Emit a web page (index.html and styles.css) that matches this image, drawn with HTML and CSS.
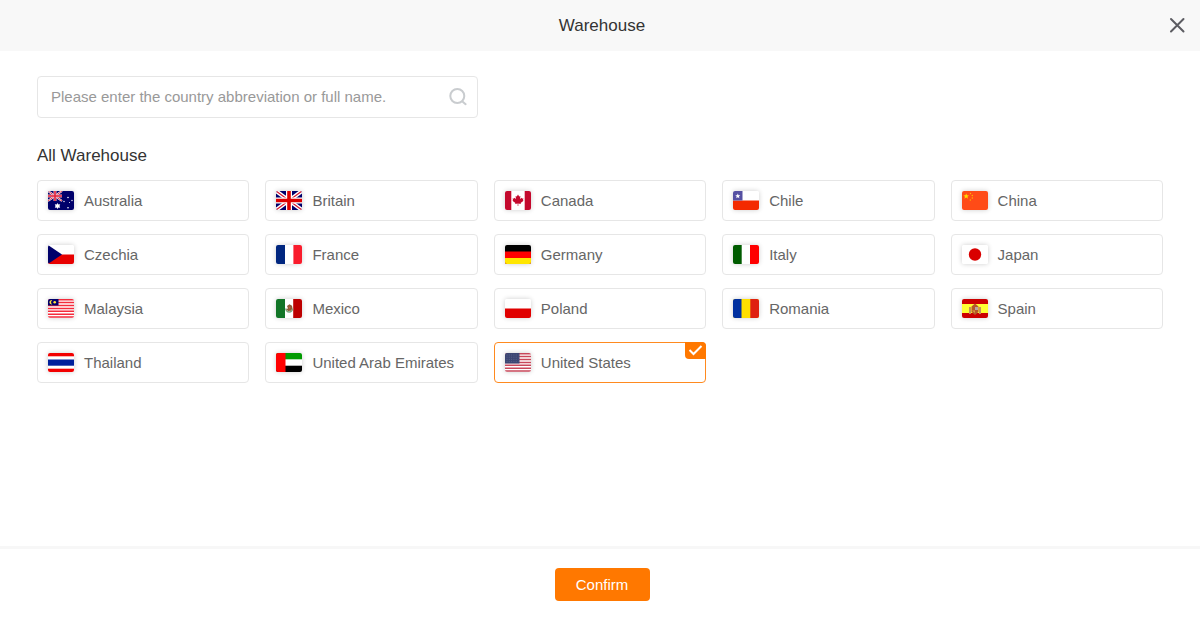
FILE: index.html
```html
<!DOCTYPE html>
<html lang="en">
<head>
    <meta charset="UTF-8">
    <meta name="viewport" content="width=device-width, initial-scale=1.0">
    <title>Warehouse</title>
    <link rel="stylesheet" href="styles.css">
</head>
<body>
    <header class="header">
        <h1 class="title">Warehouse</h1>
        <button class="close-btn" type="button" aria-label="Close">
            <svg width="16" height="16" viewBox="0 0 16 16"><path d="M2 2l12.5 12.5M14.5 2L2 14.5" stroke="#5c5c62" stroke-width="2" stroke-linecap="round"/></svg>
        </button>
    </header>

    <main class="content">
        <div class="search">
            <input class="search-input" type="text" aria-label="Search warehouse" placeholder="Please enter the country abbreviation or full name.">
            <button class="search-btn" type="button" aria-label="Search">
                <svg width="18" height="18" viewBox="0 0 18 18" fill="none" stroke="#c9cccf" stroke-width="2" stroke-linecap="round"><circle cx="8.3" cy="8" r="7"/><path d="M13.4 13.4l3.2 2.8"/></svg>
            </button>
        </div>

        <h2 class="subtitle">All Warehouse</h2>
        <div class="list">
            <label class="item">
                <input type="radio" name="warehouse" value="AU">
                <svg class="flag" viewBox="0 0 26 19">
                    <rect width="26" height="19" fill="#00006b"/>
                    <path d="M0 0l14 10M14 0L0 10" stroke="#fff" stroke-width="2"/>
                    <path d="M0 0l14 10M14 0L0 10" stroke="#e03a50" stroke-width="1"/>
                    <path d="M7 0v10M0 5h14" stroke="#f4b8c4" stroke-width="3"/>
                    <path d="M7 0v10M0 5h14" stroke="#e0243c" stroke-width="1.6"/>
                    <path d="M9.5 12l.9 1.5 1.8-.2-.7 1.7.7 1.7-1.8-.2-.9 1.5-.9-1.5-1.8.2.7-1.700-.7-1.700 1.800.2z" fill="#fff"/>
                    <g fill="#fff"><circle cx="20" cy="6.5" r=".8"/><circle cx="16" cy="10.5" r=".7"/><circle cx="24" cy="9.5" r=".7"/><circle cx="21.5" cy="11.5" r=".5"/><circle cx="20" cy="16.8" r=".8"/></g>
                </svg>
                <span>Australia</span>
            </label>
            <label class="item">
                <input type="radio" name="warehouse" value="GB">
                <svg class="flag" viewBox="0 0 26 19">
                    <rect width="26" height="19" fill="#00006b"/>
                    <path d="M0 0l26 19M26 0L0 19" stroke="#fff" stroke-width="4"/>
                    <path d="M0 0l26 19M26 0L0 19" stroke="#d8152c" stroke-width="1.2"/>
                    <path d="M13 0v19M0 9.5h26" stroke="#fff" stroke-width="6"/>
                    <path d="M13 0v19M0 9.5h26" stroke="#d00" stroke-width="3.6"/>
                </svg>
                <span>Britain</span>
            </label>
            <label class="item">
                <input type="radio" name="warehouse" value="CA">
                <svg class="flag" viewBox="0 0 26 19">
                    <rect width="26" height="19" fill="#fff"/>
                    <path d="M0 0h6.3v19H0zM19.7 0H26v19h-6.3z" fill="#c4092d"/>
                    <path d="M13 3.5l1.2 2.1 1.2-.5-.4 3 1.6-1.4.4.9 1.5-.1-.6 1.7.7.5-3 2.3.3 1-2.6-.4V15h-.6v-2.4l-2.6.4.3-1-3-2.3.7-.5-.6-1.7 1.5.1.4-.9L11 8.1l-.4-3 1.2.5z" fill="#c4092d"/>
                </svg>
                <span>Canada</span>
            </label>
            <label class="item">
                <input type="radio" name="warehouse" value="CL">
                <svg class="flag" viewBox="0 0 26 19">
                    <rect width="26" height="19" fill="#fff"/>
                    <rect y="9.5" width="26" height="9.5" fill="#f32a00"/>
                    <rect width="9.5" height="9.5" fill="#5550a2"/>
                    <path d="M4.8 2.5l.7 1.7 1.8.1-1.4 1.2.5 1.8-1.6-1-1.6 1 .5-1.8-1.4-1.2 1.8-.1z" fill="#fff"/>
                </svg>
                <span>Chile</span>
            </label>
            <label class="item">
                <input type="radio" name="warehouse" value="CN">
                <svg class="flag" viewBox="0 0 26 19">
                    <rect width="26" height="19" fill="#ff4b17"/>
                    <path d="M4.2 2.5l.8 1.8 2 .1-1.6 1.3.6 2-1.8-1.1-1.8 1.1.6-2-1.6-1.3 2-.1z" fill="#ffdc00"/>
                    <g fill="#ffb800"><circle cx="8.5" cy="2.5" r=".7"/><circle cx="10.3" cy="4.5" r=".7"/><circle cx="10.3" cy="7" r=".7"/><circle cx="8.3" cy="9" r=".7"/></g>
                </svg>
                <span>China</span>
            </label>
            <label class="item">
                <input type="radio" name="warehouse" value="CZ">
                <svg class="flag" viewBox="0 0 26 19">
                    <rect width="26" height="19" fill="#fff"/>
                    <rect y="9.5" width="26" height="9.5" fill="#e80000"/>
                    <path d="M0 0l14 9.5L0 19z" fill="#00006b"/>
                </svg>
                <span>Czechia</span>
            </label>
            <label class="item">
                <input type="radio" name="warehouse" value="FR">
                <svg class="flag" viewBox="0 0 26 19">
                    <rect width="26" height="19" fill="#fff"/>
                    <rect width="9" height="19" fill="#00267f"/>
                    <rect x="17.4" width="8.6" height="19" fill="#f91c2c"/>
                </svg>
                <span>France</span>
            </label>
            <label class="item">
                <input type="radio" name="warehouse" value="DE">
                <svg class="flag" viewBox="0 0 26 19">
                    <rect width="26" height="19" fill="#000"/>
                    <rect y="6.5" width="26" height="12.5" fill="#f00"/>
                    <rect y="13" width="26" height="6" fill="#ffe600"/>
                </svg>
                <span>Germany</span>
            </label>
            <label class="item">
                <input type="radio" name="warehouse" value="IT">
                <svg class="flag" viewBox="0 0 26 19">
                    <rect width="26" height="19" fill="#fff"/>
                    <rect width="8.7" height="19" fill="#005c00"/>
                    <rect x="17" width="9" height="19" fill="#f00"/>
                </svg>
                <span>Italy</span>
            </label>
            <label class="item">
                <input type="radio" name="warehouse" value="JP">
                <svg class="flag" viewBox="0 0 26 19">
                    <rect width="26" height="19" fill="#fff"/>
                    <circle cx="13" cy="9.5" r="6.2" fill="#d90000"/>
                </svg>
                <span>Japan</span>
            </label>
            <label class="item">
                <input type="radio" name="warehouse" value="MY">
                <svg class="flag" viewBox="0 0 26 19">
                    <rect width="26" height="19" fill="#fff"/>
                    <path d="M0 .7h26M0 3.6h26M0 6.5h26M0 9.4h26M0 12.3h26M0 15.2h26M0 18.1h26" stroke="#f42b3c" stroke-width="1.5"/>
                    <rect width="10.5" height="6.5" fill="#00006b"/>
                    <path d="M4.3 1.2a2.2 2.2 0 1 0 0 4.2 2.4 2.4 0 0 1 0-4.2z" fill="#ffe23b"/>
                    <circle cx="6.7" cy="3.2" r="1.3" fill="#ffe23b"/>
                </svg>
                <span>Malaysia</span>
            </label>
            <label class="item">
                <input type="radio" name="warehouse" value="MX">
                <svg class="flag" viewBox="0 0 26 19">
                    <rect width="26" height="19" fill="#fff"/>
                    <rect width="9" height="19" fill="#127527"/>
                    <rect x="17.2" width="8.8" height="19" fill="#bd0000"/>
                    <path d="M9.8 9.5a3.4 3.4 0 0 0 6.8 0" stroke="#7ba77f" stroke-width="1.5" fill="none"/>
                    <path d="M11 7l2.5-1.7L16 6.8l.5 2.5-1.5 2.5-3 .3-2-2 2-.6z" fill="#8d5c38"/>
                    <path d="M12.500 7.500l2 .4-.8 2z" fill="#d15c44"/>
                </svg>
                <span>Mexico</span>
            </label>
            <label class="item">
                <input type="radio" name="warehouse" value="PL">
                <svg class="flag" viewBox="0 0 26 19">
                    <rect width="26" height="19" fill="#fff"/>
                    <rect y="9.5" width="26" height="9.5" fill="#e00000"/>
                </svg>
                <span>Poland</span>
            </label>
            <label class="item">
                <input type="radio" name="warehouse" value="RO">
                <svg class="flag" viewBox="0 0 26 19">
                    <rect width="26" height="19" fill="#ffdf00"/>
                    <rect width="8.5" height="19" fill="#0030a0"/>
                    <rect x="17.3" width="8.7" height="19" fill="#df2010"/>
                </svg>
                <span>Romania</span>
            </label>
            <label class="item">
                <input type="radio" name="warehouse" value="ES">
                <svg class="flag" viewBox="0 0 26 19">
                    <rect width="26" height="19" fill="#c00"/>
                    <rect y="5" width="26" height="9" fill="#ff3"/>
                    <path d="M8 8v7M18 8v7" stroke="#c4905c" stroke-width="2"/>
                    <path d="M9.5 7.5l3.5-3 3.5 3V13L13 16l-3.5-3z" fill="#b5582a"/>
                    <path d="M13 8h3v3h-3z" fill="#b9a3a6"/>
                    <path d="M10 11.5h3V14z" fill="#d9a13a"/>
                </svg>
                <span>Spain</span>
            </label>
            <label class="item">
                <input type="radio" name="warehouse" value="TH">
                <svg class="flag" viewBox="0 0 26 19">
                    <rect width="26" height="19" fill="#f20000"/>
                    <rect y="3.3" width="26" height="12.4" fill="#fff"/>
                    <rect y="6.5" width="26" height="6.2" fill="#00209c"/>
                </svg>
                <span>Thailand</span>
            </label>
            <label class="item">
                <input type="radio" name="warehouse" value="AE">
                <svg class="flag" viewBox="0 0 26 19">
                    <rect width="26" height="19" fill="#fff"/>
                    <rect width="26" height="6.3" fill="#009a00"/>
                    <rect y="12.7" width="26" height="6.3" fill="#000"/>
                    <rect width="9.5" height="19" fill="#f00"/>
                </svg>
                <span>United Arab Emirates</span>
            </label>
            <label class="item">
                <input type="radio" name="warehouse" value="US" checked>
                <svg class="flag" viewBox="0 0 26 19">
                    <rect width="26" height="19" fill="#fff"/>
                    <path d="M0 .7h26M0 3.6h26M0 6.5h26M0 9.4h26M0 12.3h26M0 15.2h26M0 18.1h26" stroke="#c8475a" stroke-width="1.5"/>
                    <rect width="14.5" height="10.5" fill="#3c4673"/>
                    <path d="M1.5 2h12M1.5 4.2h12M1.5 6.4h12M1.5 8.6h12" stroke="#5f688f" stroke-width=".8" stroke-dasharray="1 1.3"/>
                </svg>
                <span>United States</span>
                <svg class="tick" viewBox="0 0 21 17"><path d="M4.500 8l4 4 8-8" fill="none" stroke="#fff" stroke-width="2"/></svg>
            </label>
        </div>
    </main>

    <footer class="footer">
        <button class="confirm-btn" type="button">Confirm</button>
    </footer>
</body>
</html>
```
FILE: styles.css
```css
*{box-sizing:border-box}
body{font-family:"Liberation Sans",Arial,sans-serif;margin:0;min-height:100vh;display:flex;flex-direction:column;background:#fff;color:#333}
button,input{font-family:inherit}
.header{position:relative;display:flex;align-items:center;justify-content:center;height:51px;padding-left:4px;background:#f8f8f8}
.title,.subtitle{margin:0;font-size:17px;font-weight:400;line-height:20px}
.close-btn{position:absolute;top:13px;right:11px;display:flex;padding:4px;border:none;background:none;cursor:pointer}
.content{flex:1;padding:25px 37px}
.search{display:flex;align-items:center;max-width:441px;height:42px;padding:0 10px 0 13px;border:1px solid #e6e6e6;border-radius:4px}
.search-input{flex:1;min-width:0;height:38px;padding:0 0 2px;border:none;outline:none;background:none;font-size:15px;color:#333}
.search-input::placeholder{color:#999;opacity:1}
.search-btn{display:flex;padding:0;border:none;background:none;cursor:pointer}
.subtitle{margin:28px 0 14px}
.list{display:grid;grid-template-columns:repeat(5,1fr);gap:13px 16px}
.item{position:relative;display:flex;align-items:center;gap:10px;height:41px;padding:0 10px;border:1px solid #e6e6e6;border-radius:4px;font-size:15px;color:#666;cursor:pointer}
.item input{position:absolute;margin:0;opacity:0}
.item:has(input:checked){border-color:#ff8a1f}
.flag{width:26px;height:19px;border-radius:2px;box-shadow:0 0 5px rgba(0,0,0,0.2)}
.tick{position:absolute;top:-1px;right:-1px;width:21px;height:17px;background:#ff7800;border-radius:0 4px 0 4px}
.footer{display:flex;justify-content:center;padding:19px 14px 18px 18px;border-top:3px solid #f7f7f7}
.confirm-btn{width:95px;height:33px;padding:0;border:none;border-radius:4px;background:#ff7800;color:#fff;font-size:15px;cursor:pointer}
```
